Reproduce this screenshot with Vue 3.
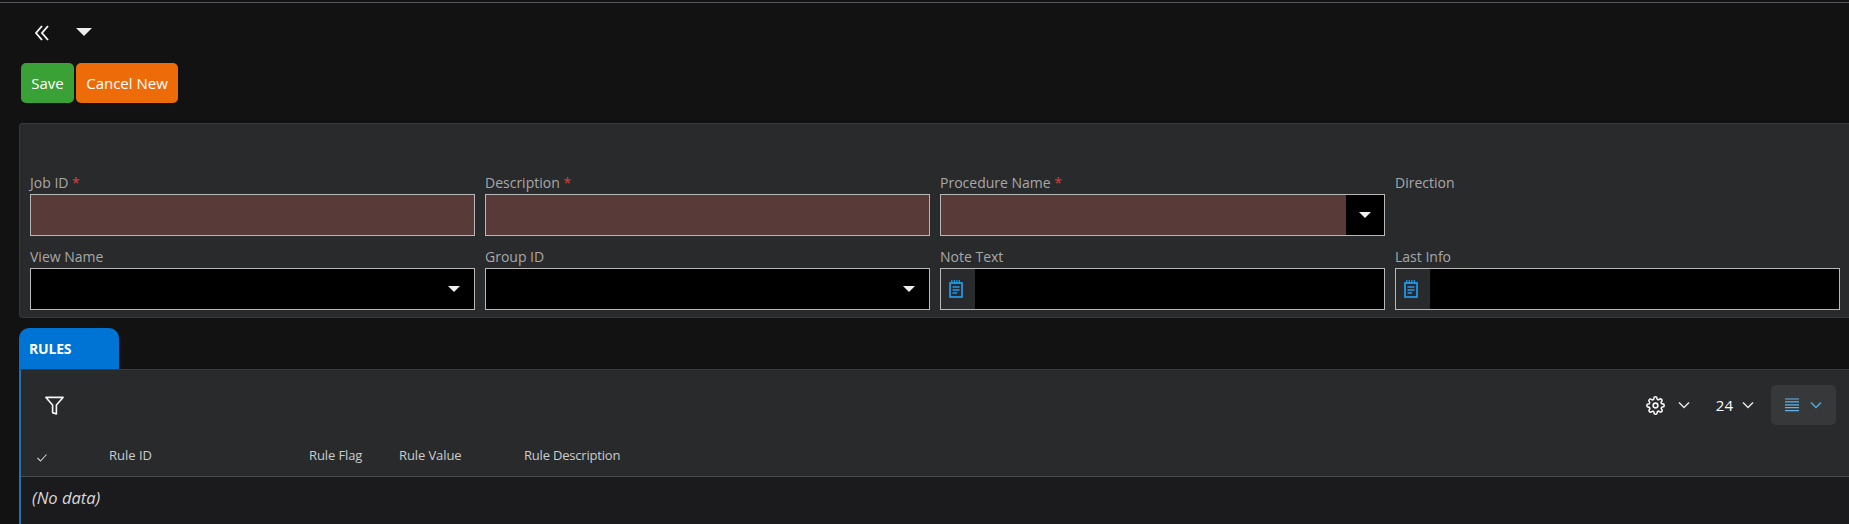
<script setup>
const row1 = [
  { label: 'Job ID', req: true, kind: 'req' },
  { label: 'Description', req: true, kind: 'req' },
  { label: 'Procedure Name', req: true, kind: 'reqsel' },
  { label: 'Direction', kind: 'none' },
]
const row2 = [
  { label: 'View Name', kind: 'sel' },
  { label: 'Group ID', kind: 'sel' },
  { label: 'Note Text', kind: 'note' },
  { label: 'Last Info', kind: 'note' },
]
const fields = [...row1, ...row2]
</script>

<template>
  <div class="page">
    <div class="topline"></div>
    <div class="nav">
      <svg class="dbl" width="14" height="16" viewBox="0 0 14 16" fill="none" stroke="#f4f4f4" stroke-width="1.9">
        <path d="M7 1 L1 8 L7 15" /><path d="M13 1 L7 8 L13 15" />
      </svg>
      <span class="navtri"></span>
    </div>
    <div class="actions">
      <button class="btn save">Save</button>
      <button class="btn cancel">Cancel New</button>
    </div>
    <section class="panel">
      <div class="grid">
        <div v-for="f in fields" :key="f.label" class="field">
          <label class="lbl">{{ f.label }}<span v-if="f.req" class="star"> *</span></label>
          <div v-if="f.kind !== 'none'" class="input" :class="{ red: f.req }">
            <span v-if="f.kind === 'note'" class="addon">
              <svg width="14" height="18" viewBox="0 0 14 18" fill="none" stroke="#1f9cf0" stroke-width="1.7">
                <rect x="1" y="3" width="12" height="14" />
                <path d="M2.8 0V3.5M5.3 0V3.5M7.8 0V3.5M10.3 0V3.5" stroke-width="1.2" />
                <path d="M3.5 7H10.5M3.5 10H10.5M3.5 13H8" stroke-width="1.4" />
              </svg>
            </span>
            <span v-if="f.kind === 'sel'" class="tri sel"></span>
            <span v-if="f.kind === 'reqsel'" class="drop"><span class="tri"></span></span>
          </div>
        </div>
      </div>
    </section>
    <div class="tab">RULES</div>
    <section class="rules">
      <div class="toolbar">
        <svg class="filter" width="19" height="19" viewBox="0 0 20 20" fill="none" stroke="#f6f6f6" stroke-width="1.7" stroke-linejoin="round">
          <path d="M1 1.5H19L12 9.5V19L8 17.5V9.5Z" />
        </svg>
        <div class="tools">
          <svg class="gear" width="19" height="19" viewBox="0 0 24 24" fill="none" stroke="#f6f6f6" stroke-width="2" stroke-linecap="round" stroke-linejoin="round">
            <circle cx="12" cy="12" r="3" />
            <path d="M19.4 15a1.65 1.65 0 0 0 .33 1.82l.06.06a2 2 0 1 1-2.83 2.83l-.06-.06a1.65 1.65 0 0 0-2.82 1.17V21a2 2 0 1 1-4 0v-.09A1.65 1.65 0 0 0 7.27 19.74l-.06.06a2 2 0 1 1-2.83-2.83l.06-.06a1.65 1.65 0 0 0-1.17-2.82H3a2 2 0 1 1 0-4h.09A1.65 1.65 0 0 0 4.26 7.27l-.06-.06a2 2 0 1 1 2.83-2.83l.06.06a1.65 1.65 0 0 0 2.82-1.17V3a2 2 0 1 1 4 0v.09a1.65 1.65 0 0 0 2.82 1.17l.06-.06a2 2 0 1 1 2.83 2.83l-.06.06a1.65 1.65 0 0 0 1.17 2.82H21a2 2 0 1 1 0 4h-.09A1.65 1.65 0 0 0 19.4 15z" />
          </svg>
          <svg class="chev first" width="12" height="8" viewBox="0 0 12 8" fill="none" stroke="#e6e6e6" stroke-width="1.5"><path d="M1 1.5L6 6.5L11 1.5" /></svg>
          <span class="count">24</span>
          <svg class="chev second" width="12" height="8" viewBox="0 0 12 8" fill="none" stroke="#e6e6e6" stroke-width="1.5"><path d="M1 1.5L6 6.5L11 1.5" /></svg>
          <div class="density">
            <svg width="14" height="14" viewBox="0 0 14 14" stroke="#62b4ea" stroke-width="1.2"><path d="M0 1H14M0 3.9H14M0 6.8H14M0 9.7H14M0 12.7H14" /></svg>
            <svg class="chev" width="12" height="8" viewBox="0 0 12 8" fill="none" stroke="#4fa8e0" stroke-width="1.5"><path d="M1 1.5L6 6.5L11 1.5" /></svg>
          </div>
        </div>
      </div>
      <div class="thead">
        <svg class="check" width="10" height="8" viewBox="0 0 10 8" fill="none" stroke="#cfcfcf" stroke-width="1.1"><path d="M.5 4L3.5 7L9.5 .5" /></svg>
        <span class="c1">Rule ID</span>
        <span class="c2">Rule Flag</span>
        <span class="c3">Rule Value</span>
        <span class="c4">Rule Description</span>
      </div>
      <div class="nodata">(No data)</div>
    </section>
  </div>
</template>

<style>
html, body { margin: 0; background: #121212; overflow: hidden; }
</style>

<style scoped>
.page {
  width: 1849px;
  height: 524px;
  overflow: hidden;
  background: #121212;
  font-family: "Open Sans", "Liberation Sans", sans-serif;
  color: #fff;
}
.topline { height: 1px; margin-top: 2px; background: #55555a; }
.nav { height: 60px; display: flex; align-items: center; padding-left: 35px; box-sizing: border-box; }
.dbl { display: block; }
.navtri {
  margin-left: 27px;
  margin-top: -3px;
  border-left: 8px solid transparent;
  border-right: 8px solid transparent;
  border-top: 8px solid #eee;
}
.actions { display: flex; gap: 2px; padding-left: 21px; }
.btn {
  height: 40px;
  border: 0;
  border-radius: 5px;
  color: #fff;
  font: 15px "Open Sans", sans-serif;
  padding: 0 10px;
}
.save { background: #3aa136; width: 53px; }
.cancel { background: #ed6c09; width: 102px; }
.panel {
  margin: 20px 0 0 19px;
  height: 195px;
  box-sizing: border-box;
  background: #292a2c;
  border: 1px solid #38393b;
  border-right: 0;
  border-radius: 4px 0 0 4px;
  padding: 48px 0 0 10px;
}
.grid { display: grid; grid-template-columns: repeat(4, 445px); column-gap: 10px; row-gap: 4px; }
.field { height: 70px; display: flex; flex-direction: column; }
.lbl { font-size: 14px; line-height: 22px; height: 22px; color: #a8a8a8; }
.star { color: #d7403a; }
.input {
  height: 42px;
  box-sizing: border-box;
  background: #000;
  border: 1px solid #b8b8b8;
  display: flex;
  align-items: center;
  justify-content: flex-end;
}
.input.red { background: #583a38; }
.addon {
  align-self: stretch;
  width: 34px;
  margin-right: auto;
  background: #292a2c;
  display: flex;
  align-items: center;
  justify-content: flex-start;
  padding-left: 8px;
  box-sizing: border-box;
}
.tri {
  display: block;
  border-left: 6px solid transparent;
  border-right: 6px solid transparent;
  border-top: 6px solid #f0f0f0;
}
.tri.sel { margin-right: 14px; }
.drop { align-self: stretch; width: 38px; background: #000; display: flex; align-items: center; justify-content: center; }
.tab {
  margin: 10px 0 0 19px;
  width: 100px;
  height: 41px;
  box-sizing: border-box;
  background: #0074d4;
  border-radius: 10px 10px 0 0;
  padding: 11px 0 0 10px;
  font-size: 14px;
  line-height: 20px;
  font-weight: 700;
  letter-spacing: -0.2px;
}
.rules {
  margin-left: 19px;
  border-left: 2px solid #1f6fb5;
  border-top: 1px solid #38393b;
  height: 160px;
  background: #1b1b1d;
  box-sizing: border-box;
}
.toolbar {
  height: 72px;
  background: #292a2c;
  display: flex;
  align-items: center;
  justify-content: space-between;
  padding: 0 13px 2px 23px;
  box-sizing: border-box;
}
.filter { display: block; margin-left: 1px; }
.tools { display: flex; align-items: center; }
.gear { margin-right: 3px; margin-left: -4px; }
.chev { display: block; }
.first { margin: 0 0 0 10px; }
.count { margin-left: 26px; font-size: 15px; color: #fff; }
.second { margin-left: 9px; }
.density {
  margin-left: 17px;
  width: 65px;
  height: 40px;
  border-radius: 5px;
  background: #37383a;
  display: flex;
  align-items: center;
  justify-content: center;
  gap: 11px;
}
.thead {
  height: 34px;
  background: #292a2c;
  border-bottom: 1px solid #4a4b4d;
  font-size: 13px;
  line-height: 20px;
  color: #cccccc;
  display: flex;
  padding-left: 16px;
}
.check { margin-top: 12px; }
.thead span { margin-top: 3px; }
.c1 { margin-left: 62px; width: 200px; }
.c2 { width: 90px; letter-spacing: -0.1px; }
.c3 { width: 125px; letter-spacing: -0.1px; }
.c4 { letter-spacing: -0.2px; }
.nodata {
  padding: 9px 0 0 11px;
  font-style: italic;
  font-size: 16.5px;
  line-height: 24px;
  color: #d8d8d8;
}
</style>
